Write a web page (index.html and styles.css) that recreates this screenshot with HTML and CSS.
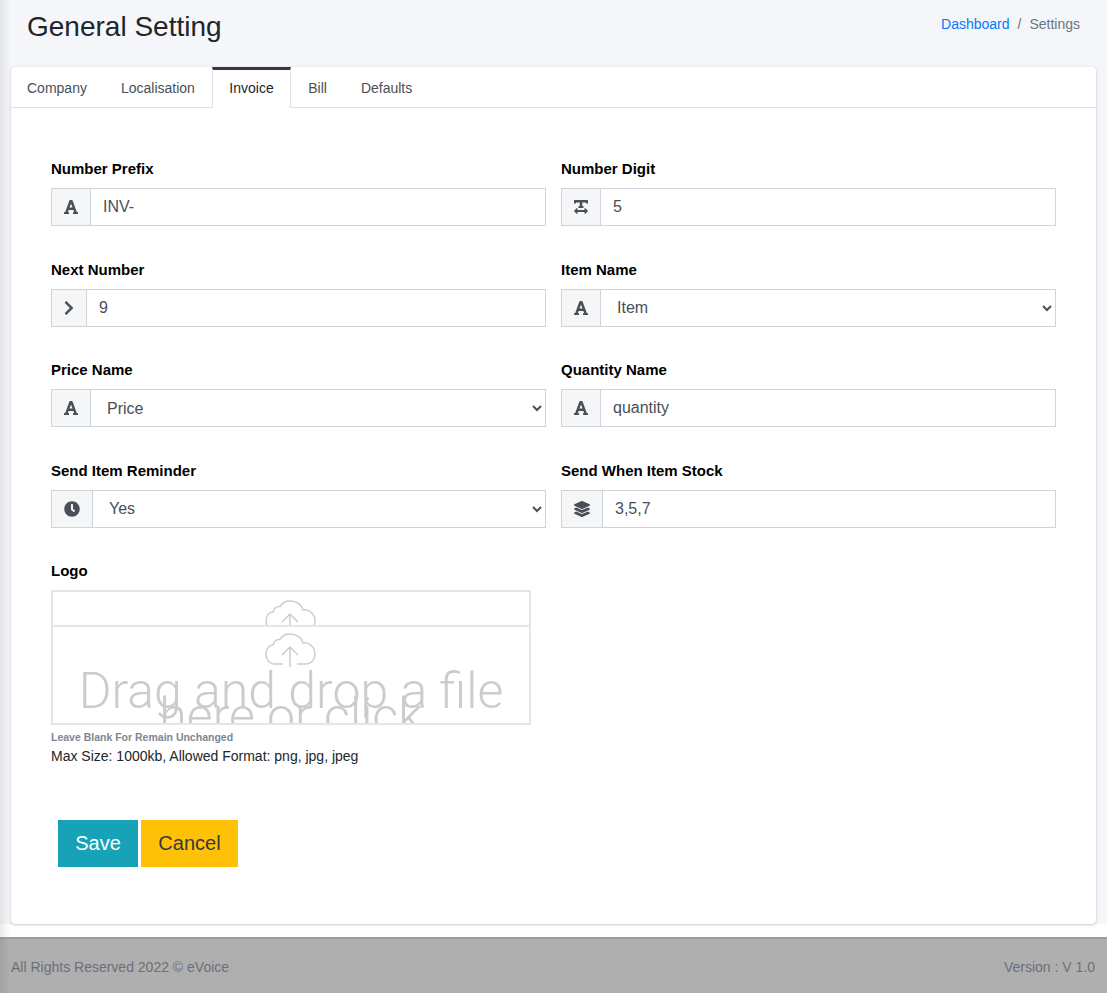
FILE: index.html
```html
<!DOCTYPE html>
<html>
  <head>
    <title>General Setting</title>
    <link rel="stylesheet" href="styles.css">
  </head>
  <body>
    <div class="content">
      <div class="page-head">
        <h1>General Setting</h1>
        <div class="crumbs"><a href="#">Dashboard</a><span class="sep">/</span><span>Settings</span></div>
      </div>

      <div class="card">
        <ul class="tabs">
          <li>Company</li>
          <li>Localisation</li>
          <li class="active">Invoice</li>
          <li>Bill</li>
          <li>Defaults</li>
        </ul>

        <form class="form" action="">
          <div class="grid">
            <div class="field">
              <label>Number Prefix</label>
              <div class="group">
                <span class="addon w40"><svg class="ic" viewBox="0 0 448 512"><use href="#i-font"/></svg></span>
                <input class="ctl" value="INV-">
              </div>
            </div>
            <div class="field">
              <label>Number Digit</label>
              <div class="group">
                <span class="addon w40"><svg class="ic" viewBox="0 0 448 512"><path d="M432 32H16A16 16 0 0 0 0 48v80a16 16 0 0 0 16 16h32a16 16 0 0 0 16-16v-16h120v112h-24a16 16 0 0 0-16 16v32a16 16 0 0 0 16 16h128a16 16 0 0 0 16-16v-32a16 16 0 0 0-16-16h-24V112h120v16a16 16 0 0 0 16 16h32a16 16 0 0 0 16-16V48a16 16 0 0 0-16-16zm-68.69 260.69C354 283.36 336 288 336 304v48H112v-48c0-14.31-17.31-21.32-27.31-11.31l-80 80a16 16 0 0 0 0 22.62l80 80C94 480.64 112 476 112 464v-48h224v48c0 14.31 17.31 21.33 27.31 11.31l80-80a16 16 0 0 0 0-22.62z"/></svg></span>
                <input class="ctl" value="5">
              </div>
            </div>

            <div class="field">
              <label>Next Number</label>
              <div class="group">
                <span class="addon w36"><svg class="ic" viewBox="0 0 320 512"><path d="M285.476 272.971L91.132 467.314c-9.373 9.373-24.569 9.373-33.941 0l-22.667-22.667c-9.357-9.357-9.375-24.522-.04-33.901L188.505 256 34.484 101.255c-9.335-9.379-9.317-24.544.04-33.901l22.667-22.667c9.373-9.373 24.569-9.373 33.941 0L285.475 239.03c9.373 9.372 9.373 24.568.001 33.941z"/></svg></span>
                <input class="ctl" value="9">
              </div>
            </div>
            <div class="field">
              <label>Item Name</label>
              <div class="group">
                <span class="addon w40"><svg class="ic" viewBox="0 0 448 512"><use href="#i-font"/></svg></span>
                <select class="ctl"><option>Item</option></select>
              </div>
            </div>

            <div class="field">
              <label>Price Name</label>
              <div class="group">
                <span class="addon w40"><svg class="ic" viewBox="0 0 448 512"><use href="#i-font"/></svg></span>
                <select class="ctl"><option>Price</option></select>
              </div>
            </div>
            <div class="field">
              <label>Quantity Name</label>
              <div class="group">
                <span class="addon w40"><svg class="ic" viewBox="0 0 448 512"><use href="#i-font"/></svg></span>
                <input class="ctl" value="quantity">
              </div>
            </div>

            <div class="field">
              <label>Send Item Reminder</label>
              <div class="group">
                <span class="addon w42"><svg class="ic" viewBox="0 0 512 512"><path d="M256,8C119,8,8,119,8,256S119,504,256,504,504,393,504,256,393,8,256,8Zm92.49,313h0l-20,25a16,16,0,0,1-22.49,2.5h0l-67-49.72a40,40,0,0,1-15-31.23V112a16,16,0,0,1,16-16h32a16,16,0,0,1,16,16V256l58,42.5A16,16,0,0,1,348.49,321Z"/></svg></span>
                <select class="ctl"><option>Yes</option></select>
              </div>
            </div>
            <div class="field">
              <label>Send When Item Stock</label>
              <div class="group">
                <span class="addon w42"><svg class="ic" viewBox="0 0 512 512"><path d="M12.41 148.02l232.94 105.67c6.8 3.09 14.49 3.09 21.29 0l232.94-105.67c16.55-7.51 16.55-32.52 0-40.03L266.65 2.31a25.607 25.607 0 0 0-21.29 0L12.41 107.98c-16.55 7.51-16.55 32.53 0 40.04zm487.18 88.28l-58.09-26.33-161.64 73.27c-7.56 3.43-15.59 5.17-23.86 5.17s-16.29-1.74-23.86-5.17L70.51 209.97l-58.1 26.33c-16.55 7.5-16.55 32.5 0 40l232.94 105.59c6.8 3.08 14.49 3.08 21.29 0L499.59 276.3c16.55-7.5 16.55-32.5 0-40zm0 127.8l-57.87-26.23-161.86 73.37c-7.56 3.43-15.59 5.17-23.86 5.17s-16.29-1.74-23.86-5.17L70.29 337.87 12.41 364.1c-16.55 7.5-16.55 32.5 0 40l232.94 105.59c6.8 3.08 14.49 3.08 21.29 0L499.59 404.1c16.55-7.5 16.55-32.5 0-40z"/></svg></span>
                <input class="ctl" value="3,5,7">
              </div>
            </div>
          </div>

          <div class="logo-field">
            <label>Logo</label>
            <div class="drop">
              <div class="drop-top"><svg class="cloud" viewBox="0 0 52 34"><use href="#i-cloud"/></svg></div>
              <div class="drop-main">
                <svg class="cloud" viewBox="0 0 52 34"><use href="#i-cloud"/></svg>
                <p>Drag and drop a file here or click</p>
              </div>
            </div>
            <small class="hint">Leave Blank For Remain Unchanged</small>
            <div class="note">Max Size: 1000kb, Allowed Format: png, jpg, jpeg</div>
          </div>

          <div class="actions">
            <button type="button" class="btn save">Save</button>
            <button type="button" class="btn cancel">Cancel</button>
          </div>
        </form>
      </div>
    </div>

    <div class="band"></div>
    <footer class="footer">
      <span>All Rights Reserved 2022 © eVoice</span>
      <span>Version : V 1.0</span>
    </footer>

    <svg class="defs" width="0" height="0">
      <defs>
        <path id="i-font" d="M432 416h-23.41L277.88 53.69A32 32 0 0 0 247.58 32h-47.16a32 32 0 0 0-30.3 21.69L39.41 416H16a16 16 0 0 0-16 16v32a16 16 0 0 0 16 16h128a16 16 0 0 0 16-16v-32a16 16 0 0 0-16-16h-19.58l23.3-64h152.56l23.3 64H304a16 16 0 0 0-16 16v32a16 16 0 0 0 16 16h128a16 16 0 0 0 16-16v-32a16 16 0 0 0-16-16zM176.85 272L224 142.51 271.15 272z"/>
        <g id="i-cloud" fill="none" stroke="#ccc" stroke-width="1.5">
          <path d="M18 31H10C4 31 1 26 1 21 1 16 4 12 8 12 9 8 12 6 15 6.500 17 3 21 1 25 1 32 1 37 5 38 10 44 9 50 14 50 21 50 27 46 31 41 31H32"/>
          <path d="M25 34V14M17 22l8-8 8 8"/>
        </g>
      </defs>
    </svg>
  </body>
</html>
```

FILE: styles.css
```css
* {
  box-sizing: border-box;
}

body {
  margin: 0;
  font-family: "Liberation Sans", Arial, sans-serif;
  font-size: 14px;
  color: #212529;
  background: #fff;
}

body::before {
  content: "";
  position: absolute;
  top: 0;
  left: 0;
  width: 10px;
  height: 993px;
  background: linear-gradient(to right, rgba(0, 0, 0, .08), rgba(0, 0, 0, 0));
}

.defs {
  position: absolute;
}

.content {
  height: 924px;
  padding: 0 11px;
  background: #f4f6f9;
}

.page-head {
  display: flex;
  justify-content: space-between;
  height: 67px;
  padding: 0 16px;
}

.page-head h1 {
  margin: 10px 0 0;
  font-size: 28px;
  line-height: 34px;
  font-weight: 400;
}

.crumbs {
  margin: 16px 0 0;
  line-height: 17px;
  color: #6c757d;
}

.crumbs a {
  color: #007bff;
  text-decoration: none;
}

.sep {
  padding: 0 8px;
}

.card {
  height: 857px;
  background: #fff;
  border-radius: 4px;
  box-shadow: 0 0 1px rgba(0, 0, 0, .125), 0 1px 3px rgba(0, 0, 0, .2);
}

.tabs {
  display: flex;
  margin: 0;
  padding: 0;
  list-style: none;
  height: 41px;
  border-bottom: 1px solid #dee2e6;
}

.tabs li {
  padding: 13px 17px 0;
  line-height: 16px;
  color: #495057;
}

.tabs li:first-child {
  padding-left: 16px;
}

.tabs li.active {
  margin-bottom: -1px;
  padding: 10px 16.500px 0;
  background: #fff;
  color: #212529;
  border-top: 3px solid #343a40;
  border-left: 1px solid #dee2e6;
  border-right: 1px solid #dee2e6;
}

.form {
  padding: 52px 40px 0;
}

.grid {
  display: grid;
  grid-template-columns: 495px 495px;
  column-gap: 15px;
  row-gap: 34.670px;
}

label {
  display: block;
  margin-bottom: 11px;
  font-weight: 700;
  font-size: 15px;
  line-height: 17px;
  color: #000;
}

.group {
  display: flex;
  height: 38px;
}

.addon {
  display: flex;
  align-items: center;
  justify-content: center;
  flex: none;
  border: 1px solid #ced4da;
  background: #f4f6f7;
}

.w36 {
  width: 36px;
}

.w40 {
  width: 40px;
}

.w42 {
  width: 42px;
}

.ic {
  height: 16px;
  fill: #495057;
}

.ctl {
  flex: 1;
  min-width: 0;
  height: 38px;
  margin-left: -1px;
  padding: 0 12px;
  border: 1px solid #ced4da;
  border-radius: 0;
  background: #fff;
  font-family: inherit;
  font-size: 16px;
  color: #495057;
}

.logo-field {
  margin-top: 34px;
}

.drop {
  width: 480px;
  height: 135px;
  border: 2px solid #e5e5e5;
  overflow: hidden;
  text-align: center;
}

.drop-top {
  height: 35px;
  padding-top: 8px;
  border-bottom: 2px solid #e5e5e5;
  overflow: hidden;
}

.drop-main {
  padding-top: 6px;
}

.cloud {
  display: block;
  width: 52px;
  height: 34px;
  margin: 0 auto;
}

.drop-main p {
  margin: 12px 0 0;
  font-family: Roboto, sans-serif;
  font-weight: 300;
  font-size: 50px;
  line-height: 25px;
  color: #ccc;
}

.hint {
  display: block;
  margin-top: 6px;
  font-size: 10.500px;
  font-weight: 700;
  line-height: 13px;
  color: #7d8791;
}

.note {
  margin-top: 4px;
  line-height: 17px;
}

.actions {
  display: flex;
  gap: 3px;
  margin-top: 55px;
  padding-left: 7px;
}

.btn {
  height: 47px;
  border: 0;
  border-radius: 0;
  font-family: inherit;
  font-size: 20px;
}

.save {
  width: 80px;
  background: #17a2b8;
  color: #fff;
}

.cancel {
  width: 97px;
  background: #ffc107;
  color: #343a40;
}

.band {
  height: 13px;
}

.footer {
  display: flex;
  justify-content: space-between;
  align-items: center;
  height: 56px;
  padding: 2px 12px 0 11px;
  border-top: 2px solid #9d9d9d;
  background: #afafaf;
  color: #6a7079;
}
```
